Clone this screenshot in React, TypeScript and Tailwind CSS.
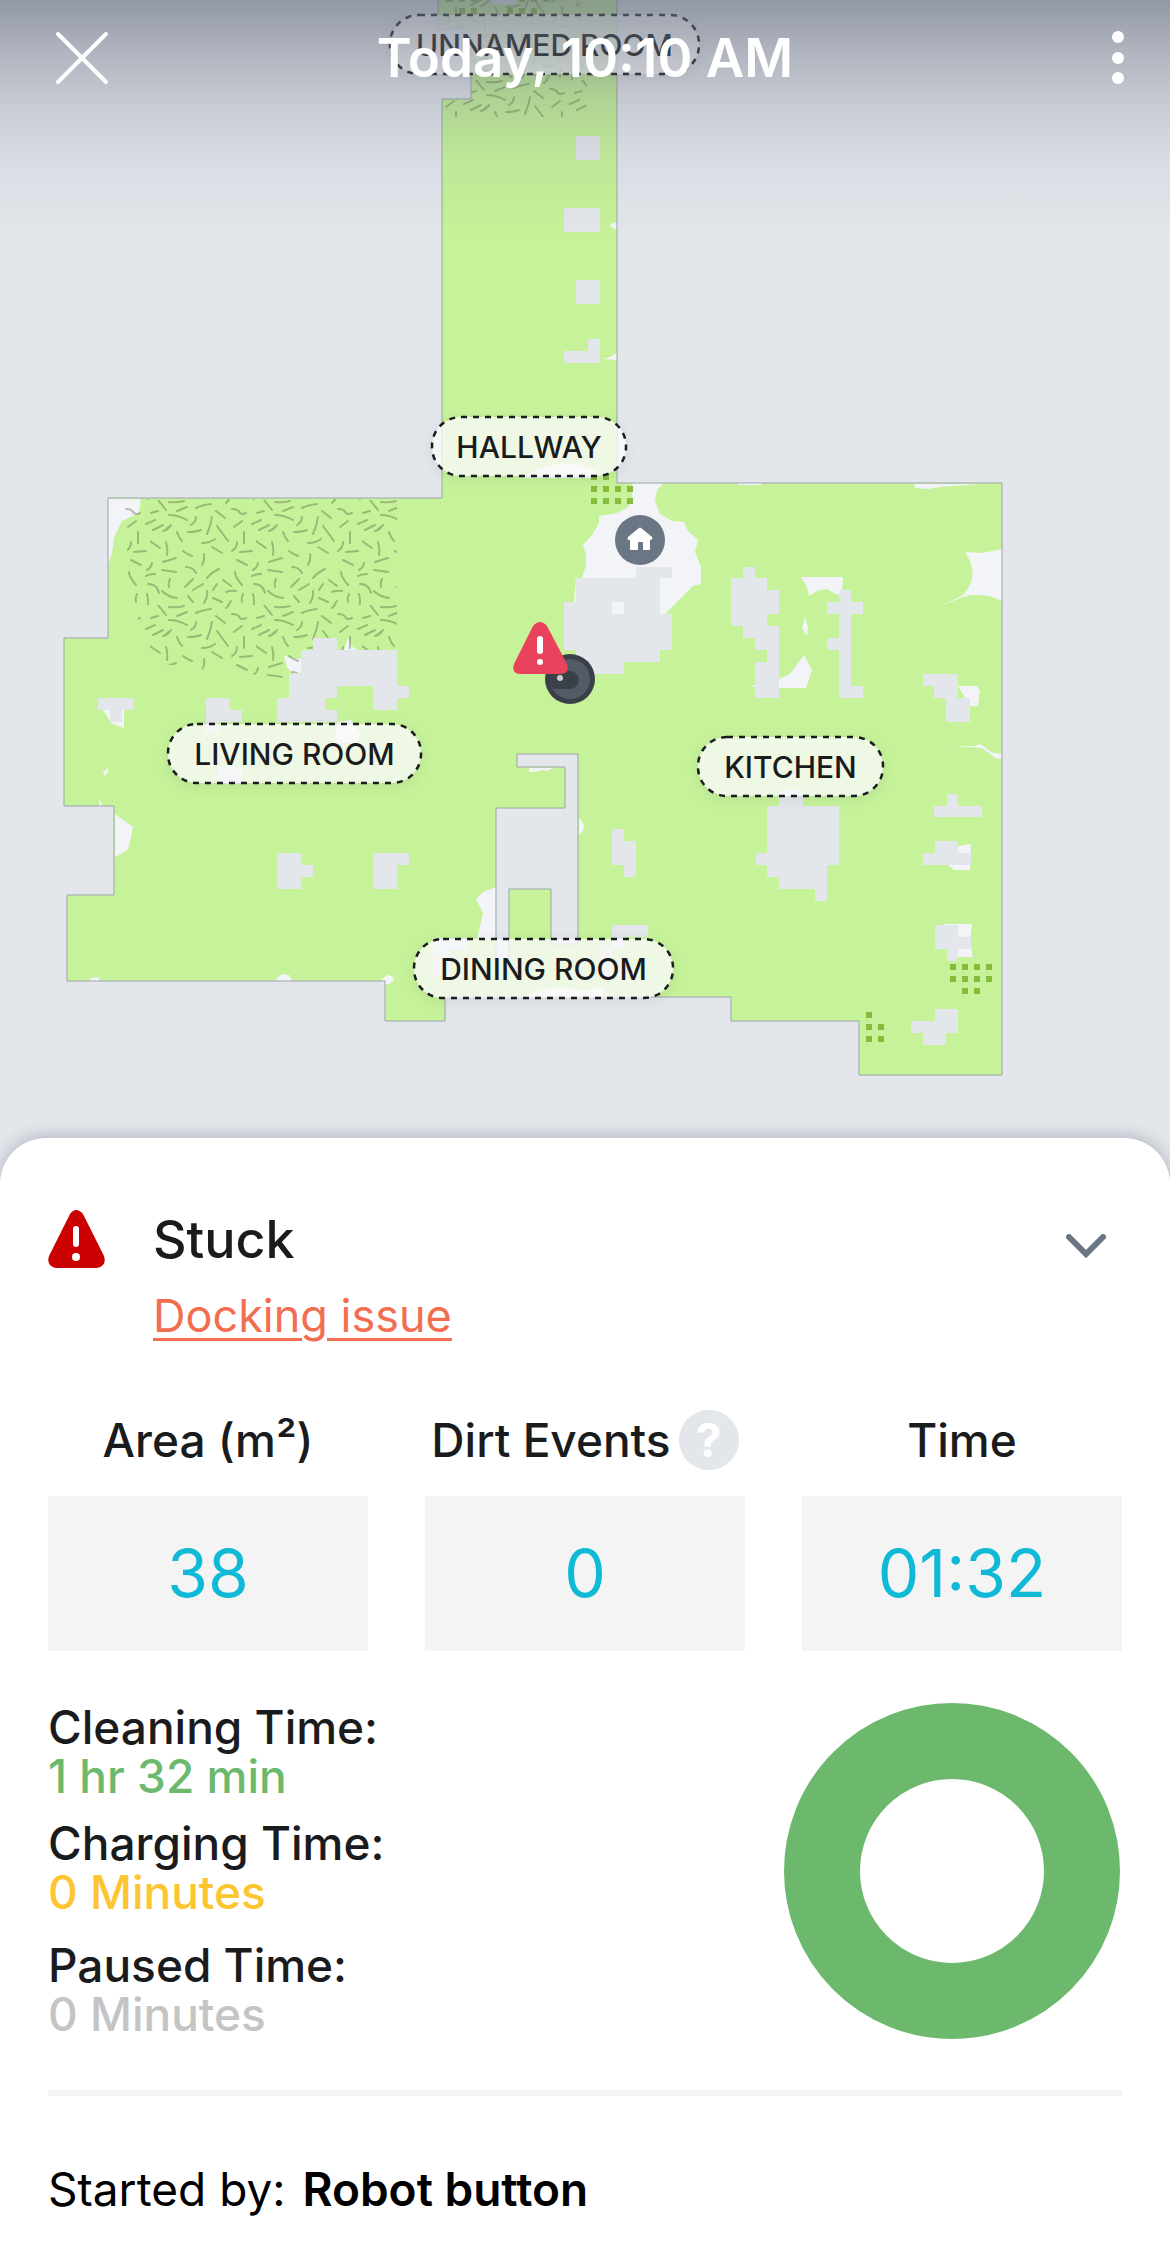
import { useState } from "react";
import { clsx } from "clsx";

const OUTLINE =
  "M438 -4V29H471V99H442V498H108V638H64V806H114V895H67V981H385V1021H445V997H731V1021H859V1075H1002V483H617V-4Z";

const INNER_WALL =
  "M517 754H578V944H551V889H509V960H496V808H565V767H517Z";

// floor the robot could not reach
const UNCLEANED = [
  "M617 222q-8 2 -7 4q3 4 7 3z",
  "M617 353l-5 3-9 3 14 1z",
  "M520 478l20-10 22-5 20 2 14 6v7z",
  "M108 499h33l-2 14-17 8-8 16-2 16-4 12z",
  "M284 655l6 3 12 1v14l-8 1-7-6z",
  "M344 650l4-13 3 9 7 4z",
  "M103 710l8 13 13 5v-18z",
  "M337 722l14-2 5 8 6 8-6 7h-22z",
  "M104 776l-1-4 5-4v4z",
  "M99 799l4 7h-4z",
  "M115 814l18 13-5 23-13 7z",
  "M88 981l4-3 7-1v4z",
  "M275 981l3-4 5-3 6 1 3 6z",
  "M381 980l6-5 5 1 2 4-5 4h-4z",
  "M632 483H664L657 490 655 501 660 514 672 521 684 522 687 530 698 540 695 552 701 567V584L693 586 665 614H574V602L576 578H582L586 565V555L583 545 592 535 599 523V516L617 513 627 508 632 500Z",
  "M738 483h24v2h-24z",
  "M914 484h66l-40 3-12 2-13-1z",
  "M801 577h42l-1 16-5 2-10-6-10 2-8 5-2-9z",
  "M805 617l3 10-1 9-5-8z",
  "M804 655l8 15-6 18h-27v-9l11-5z",
  "M751 687l5-3v3z",
  "M965 552l17 1 20-4v52q-22-11-42-3l-21 9 24-12q18-20 2-43z",
  "M958 686h19l3 5-2 15h-8z",
  "M954 746h21l5-2 13 9 9 1v5l-7-1-13-10z",
  "M958 846l13-2-1 26h-16l-6-5z",
  "M944 924h28l-2 16 3 17h-15z",
  "M496 887l-13 5-7 7 7 14-6 26h19z",
  "M529 768h24l-6 3-5-1-8 2h-5z",
  "M579 818q10 10 0 17z",
  "M525 997l20-8 20-2 20 4 18-5v11z",
];

const OBSTACLES = [
  "M492 -4h24v8h-24z",
  "M576 136h24v24h-24z",
  "M564 208h36v24h-36z",
  "M576 280h24v24h-24z",
  "M588 339h12v24h-36v-12h24z",
  "M313 638h24v12h60v36h12v12h-12v12h-24v-24h-36v12h-12v12h12v12h-60v-24h12v-24h12v-24h12z",
  "M98 698h36v12h-12v12h-12v-12h-12z",
  "M206 698h24v12h12v12h-24v12h-12z",
  "M218 766h24v18h-24z",
  "M277 853h24v12h12v12h-12v12h-24z",
  "M373 853h36v12h-12v24h-24z",
  "M636 567h36v11h-12v36h12v36h-12v12h-36v12h-48v-24h-12v-48h12v-24h60z",
  "M743 567h12v11h12v12h12v24h-12v12h12v72h-24v-36h12v-12h-12v-12h-12v-12h-12v-48h12z",
  "M839 590h12v12h12v12h-12v72h12v12h-24v-48h-12v-12h12v-24h-12v-12h12z",
  "M923 674h35v24h12v24h-24v-24h-12v-12h-11z",
  "M779 790h24v16h36v59h-12v36h-12v-12h-36v-12h-12v-12h-11v-12h11v-47h12z",
  "M947 794h11v12h24v11h-48v-11h13z",
  "M935 841h23v12h13v12h-48v-12h12z",
  "M935 925h23v12h13v12h-13v12h-11v-12h-12z",
  "M935 1009h23v24h-12v12h-23v-12h-12v-12h24z",
  "M612 829h12v12h12v36h-12v-12h-12z",
  "M612 925h36v12h-24v12h-12v28h-12v-32h12z",
  "M433 938h35v12h-18v26h-17z",
];

// one tile of carpet texture
const CARPET_TILE =
  "M8 0l8 10M19 2q8 1 15-1M1 13l7-2M27 11l10-4M46 8q6-3 15-4M19 15q9 0 18 5M46 17q0 5-5 8M62 17q-1 8-5 17M66 11l9 7M76 3l3-3M82 9q6 0 8 4q2 2 6 0M84 27l8-6M102 24l9-4M-4 24l9-4M3 30l10-5M13 31q5-1 8-6M15 30l5-4M27 32q2 6 5 9M38 32q8 0 13-2M67 26l11 15M52 43q8 0 13-4M0 41l10 7M16 42q2 7 1 13M33 51q4 3 9 5M62 47l10 6M94 32v11M87 42q0 6-5 9M90 52l12-1M54 54q1 6-2 11M13 62l13-4M87 60l10 5M2 63q-1 5-5 7M108 63q-1 5-5 7M12 70l14 2M36 67q7 0 10 6M57 78q5-6 12-9M-4 76q4-2 9-2M102 76q4-2 9-2M85 72q0 5 7 13M20 79q-2 4-1 8M35 87l8-8M43 90l10-6M73 80l8 6M67 84l-4 6M-2 84q9 0 11 9M104 84q9 0 11 9M12 91q6 6 15 7M76 92q5-2 10-1M38 96l5 6M57 91q1 6-3 12M63 98l9 4M81 101l-5 7M93 94q-2 4-1 8M103 94q2 7 0 15M-3 94q2 7 0 15";

const DIRT_DOTS = [
  [450, -1], [462, -1], [474, -1], [522, -1], [534, -1], [546, -1],
  [462, 11], [474, 11], [510, 11], [522, 11], [534, 11],
  [594, 477], [606, 477],
  [594, 489], [606, 489], [618, 489], [630, 489],
  [594, 501], [606, 501], [618, 501], [630, 501],
  [953, 967], [965, 967], [977, 967], [989, 967],
  [953, 979], [965, 979], [977, 979], [989, 979],
  [965, 991], [977, 991],
  [869, 1015], [869, 1027], [881, 1027], [869, 1039], [881, 1039],
];

const ROOMS = [
  { name: "UNNAMED ROOM", x: 390, y: 15, width: 309 },
  { name: "HALLWAY", x: 432, y: 417, width: 194 },
  { name: "LIVING ROOM", x: 168, y: 724, width: 253 },
  { name: "KITCHEN", x: 698, y: 737, width: 185 },
  { name: "DINING ROOM", x: 414, y: 939, width: 259 },
];

const STATS = [
  { label: "Area (m²)", value: "38" },
  { label: "Dirt Events", value: "0", help: true },
  { label: "Time", value: "01:32" },
];

const DURATIONS = [
  { label: "Cleaning Time:", value: "1 hr 32 min", minutes: 92, text: "text-[#6cb86c]", row: "mb-[18px]" },
  { label: "Charging Time:", value: "0 Minutes", minutes: 0, text: "text-[#fdc52f]", row: "mb-6" },
  { label: "Paused Time:", value: "0 Minutes", minutes: 0, text: "text-[#c4c4c4]", row: "" },
];

function RoomLabel({ name, x, y, width }: { name: string; x: number; y: number; width: number }) {
  return (
    <g>
      <rect
        x={x}
        y={y}
        width={width}
        height={59}
        rx={29}
        fill="#fff"
        fillOpacity={0.76}
        stroke="#1a1b1d"
        strokeWidth={2.5}
        strokeDasharray="6 6"
        className="drop-shadow-[0_3px_6px_rgba(60,70,90,0.12)]"
      />
      <text
        x={x + width / 2}
        y={y + 41}
        textAnchor="middle"
        fontSize={30}
        fontWeight={500}
        fill="#1a1b1d"
      >
        {name}
      </text>
    </g>
  );
}

function CleaningMap() {
  return (
    <svg viewBox="0 0 1170 1190" className="block w-full" role="img" aria-label="Cleaning map">
      <defs>
        <pattern id="carpet" x={150} y={500} width={106} height={105} patternUnits="userSpaceOnUse">
          <path d={CARPET_TILE} fill="none" stroke="#5c6b4a" strokeOpacity={0.42} strokeWidth={2} strokeLinecap="round" />
        </pattern>
        <clipPath id="floor">
          <path d={OUTLINE} />
        </clipPath>
      </defs>

      <path d={OUTLINE} fill="#c6f299" />
      <g clipPath="url(#floor)" fill="#f3f4f7">
        {UNCLEANED.map((d) => (
          <path key={d} d={d} />
        ))}
      </g>
      <g clipPath="url(#floor)">
        <path
          d="M125 499H397V650H301V672L282 678 250 674 222 664 200 670 165 664 142 652 137 610 128 575Z"
          fill="url(#carpet)"
        />
        <path d="M440 0H580L588 100 582 117H442Z" fill="url(#carpet)" />
      </g>
      <g fill="#e3e6eb">
        {OBSTACLES.map((d) => (
          <path key={d} d={d} />
        ))}
      </g>
      <rect x={612} y={602} width={12} height={12} fill="#f3f4f7" />
      <g fill="#86bb3c">
        {DIRT_DOTS.map(([cx, cy]) => (
          <rect key={`${cx}-${cy}`} x={cx - 3} y={cy - 3} width={6} height={6} />
        ))}
      </g>
      <path d={INNER_WALL} fill="#e3e6eb" stroke="#9aa5ab" strokeWidth={1} />
      <path d={OUTLINE} fill="none" stroke="#9aa5ab" strokeWidth={1} />

      {/* dock */}
      <circle cx={640} cy={540} r={25} fill="#6b7684" />
      <path
        d="M639 528q1-1 2 0l11 9q1 1 0 2l-1 1h-1v9q0 1-1 1h-6v-7q0-1-1-1h-3q-1 0-1 1v7h-7q-1 0-1-1v-9h-2q-1-1 0-3z"
        fill="#fff"
      />

      {/* robot */}
      <circle cx={570} cy={679} r={25} fill="#3a4047" />
      <circle cx={570} cy={679} r={20} fill="#535c66" />
      <path d="M550 679v-8h20a9 9 0 0 1 0 18h-17q-3-5-3-10z" fill="#3a4047" />
      <circle cx={560} cy={678} r={3} fill="#c9cdd3" />
      <path d="M533 626q7-8 14 0l20 38q3 9-6 10H520q-9-1-6-10z" fill="#e8425c" />
      <path d="M540 639v12" stroke="#fff" strokeWidth={6} strokeLinecap="round" />
      <circle cx={540} cy={662} r={3} fill="#fff" />

      {ROOMS.map((room) => (
        <RoomLabel key={room.name} {...room} />
      ))}
    </svg>
  );
}

function DurationChart() {
  const total = DURATIONS.reduce((sum, d) => sum + d.minutes, 0);
  let offset = 0;

  return (
    <svg viewBox="0 0 336 336" className="size-[336px] shrink-0 -rotate-90" role="img" aria-label="Time breakdown">
      {DURATIONS.filter((d) => d.minutes > 0).map((d) => {
        const share = (d.minutes / total) * 100;
        const start = offset;
        offset += share;
        return (
          <circle
            key={d.label}
            cx={168}
            cy={168}
            r={130}
            pathLength={100}
            fill="none"
            stroke="currentColor"
            strokeWidth={76}
            strokeDasharray={share < 100 ? `${share} ${100 - share}` : undefined}
            strokeDashoffset={-start}
            className={d.text}
          />
        );
      })}
    </svg>
  );
}

export default function App() {
  const [open, setOpen] = useState(true);

  return (
    <div className="min-h-screen bg-white font-['Inter',sans-serif] text-[#1a1b1d]">
      <div className="relative bg-[#e3e6eb]">
        <CleaningMap />
        <header className="absolute inset-x-0 top-0 flex h-[240px] items-start justify-between bg-[linear-gradient(to_bottom,rgba(103,110,128,0.65)_0%,rgba(103,110,128,0.41)_22%,rgba(103,110,128,0.24)_42%,rgba(103,110,128,0.08)_67%,rgba(103,110,128,0)_100%)] px-[46px] pt-[22px] text-white">
          <button type="button" aria-label="Close" className="flex size-[72px] items-center justify-center">
            <svg viewBox="0 0 54 54" className="size-[54px]" fill="none" stroke="currentColor" strokeWidth={4} strokeLinecap="round">
              <path d="M3 3l48 48M51 3L3 51" />
            </svg>
          </button>
          <h1 className="text-[53px] leading-[72px] font-semibold whitespace-nowrap">Today, 10:10 AM</h1>
          <button type="button" aria-label="More options" className="flex h-[72px] w-[72px] items-center justify-end">
            <svg viewBox="0 0 12 54" className="h-[54px] w-3" fill="currentColor">
              <circle cx={6} cy={6} r={6} />
              <circle cx={6} cy={27} r={6} />
              <circle cx={6} cy={47} r={6} />
            </svg>
          </button>
        </header>
      </div>

      <main className="relative -mt-[52px] rounded-t-[46px] bg-white px-12 pt-[72px] pb-[38px] shadow-[0_-2px_16px_rgba(60,70,90,0.3)]">
        <div className="flex items-start">
          <svg viewBox="0 0 57 58" className="h-[58px] w-[57px] shrink-0" aria-hidden="true">
            <path d="M22 4q6-8 13 0l21 42q3 10-7 12H8Q-2 56 1 46z" fill="#cb0000" />
            <path d="M28 19v15" stroke="#fff" strokeWidth={6} strokeLinecap="round" />
            <circle cx={28} cy={47} r={4} fill="#fff" />
          </svg>
          <div className="ml-12 grow">
            <h2 className="text-[52px] leading-[60px] font-medium">Stuck</h2>
            <a
              href="#docking-issue"
              className="mt-[18px] inline-block text-[45px] leading-[56px] text-[#f26e50] underline decoration-3 underline-offset-[6px]"
            >
              Docking issue
            </a>
          </div>
          <button
            type="button"
            aria-label="Toggle details"
            aria-expanded={open}
            onClick={() => setOpen(!open)}
            className="flex h-[72px] w-[72px] items-center justify-center text-[#6b7684]"
          >
            <svg viewBox="0 0 40 24" className={clsx("h-6 w-10", !open && "rotate-180")} fill="none" stroke="currentColor" strokeWidth={6} strokeLinecap="round">
              <path d="M3 3l17 17L37 3" />
            </svg>
          </button>
        </div>

        {open && (
          <>
            <dl className="mt-[66px] grid grid-cols-3 gap-[57px]">
              {STATS.map((stat) => (
                <div key={stat.label}>
                  <dt className="flex items-center justify-center gap-2 text-[46px] leading-[60px] font-medium whitespace-nowrap">
                    {stat.label}
                    {stat.help && (
                      <button
                        type="button"
                        aria-label="About dirt events"
                        className="size-[60px] shrink-0 rounded-full bg-[#e3e6eb] text-[46px] leading-[60px] font-bold text-white"
                      >
                        ?
                      </button>
                    )}
                  </dt>
                  <dd className="mt-[26px] bg-[#f4f4f4] text-center text-[66px] leading-[155px] text-[#10bad6]">
                    {stat.value}
                  </dd>
                </div>
              ))}
            </dl>

            <div className="mt-[52px] flex items-start justify-between pr-0.5">
              <dl className="text-[46px] leading-[49px] font-medium">
                {DURATIONS.map((d) => (
                  <div key={d.label} className={d.row}>
                    <dt>{d.label}</dt>
                    <dd className={d.text}>{d.value}</dd>
                  </div>
                ))}
              </dl>
              <DurationChart />
            </div>
          </>
        )}

        <hr className="mt-[51px] border-t-6 border-[#f2f3f5]" />
        <p className="mt-[65px] text-[46px] leading-[56px] text-black">
          Started by: <span className="ml-1 font-semibold">Robot button</span>
        </p>
      </main>
    </div>
  );
}
